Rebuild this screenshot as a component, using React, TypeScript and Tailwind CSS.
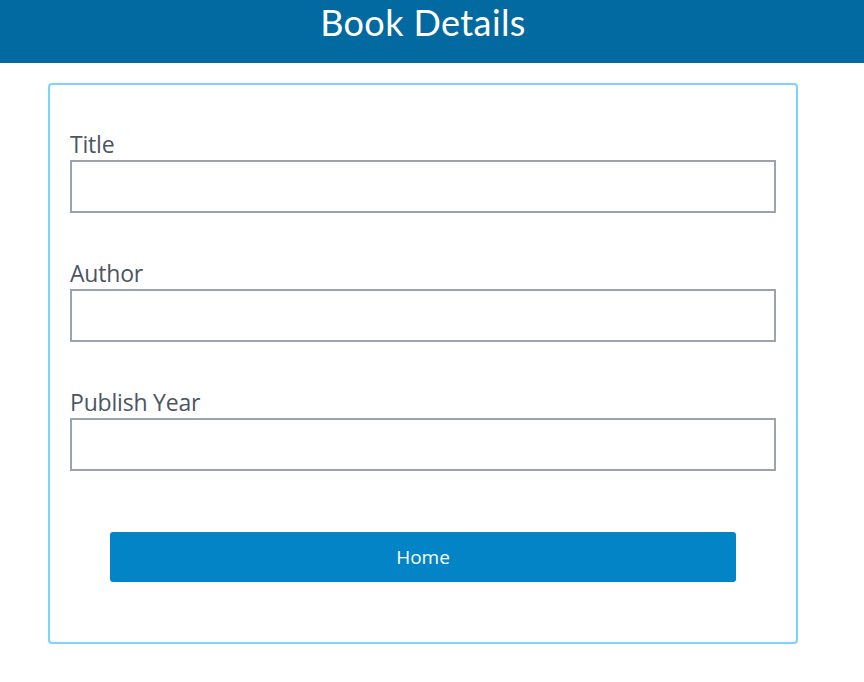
const fields = ["Title", "Author", "Publish Year"];

export default function App() {
  return (
    <div className="min-h-screen bg-white font-['Open_Sans',sans-serif]">
      <header className="w-full h-[63px] bg-[#0369a1]">
        <div className="w-[846px] flex justify-center">
          <h1 className="text-white font-['Lato',sans-serif] text-[36px] leading-[44px] tracking-[0.4px]">Book Details</h1>
        </div>
      </header>
      <div className="w-[846px] pt-5">
        <div className="w-[750px] mx-auto border-2 border-[#7dd3fc] rounded-sm px-5 pt-[43px] pb-[60px] flex flex-col">
          <div className="flex flex-col gap-[44px]">
            {fields.map((label) => (
              <div key={label} className="flex flex-col">
                <label className="text-[23px] leading-[32px] text-[#4b5563] tracking-[-0.2px]">{label}</label>
                <input
                  type="text"
                  className="w-full h-[53px] border-2 border-[#9ca3af] bg-white outline-none px-3"
                />
              </div>
            ))}
          </div>
          <button className="mx-10 mt-[61px] h-[50px] bg-[#0284c7] text-white text-[19px] rounded-[3px]">
            Home
          </button>
        </div>
      </div>
    </div>
  );
}
